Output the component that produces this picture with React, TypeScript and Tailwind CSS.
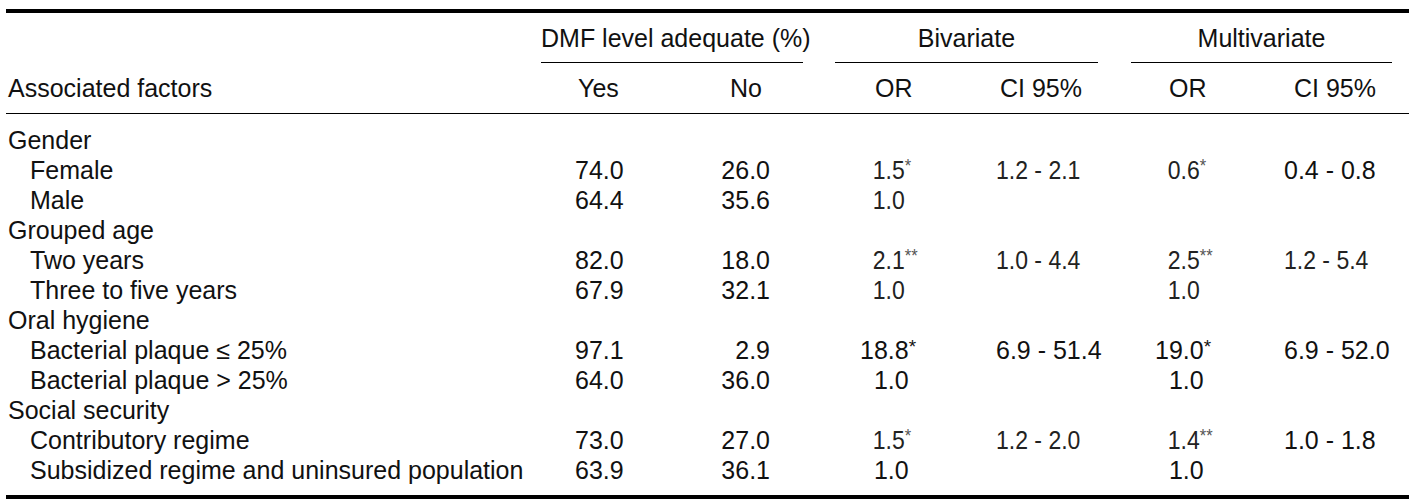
import type { ReactNode } from "react"

type Num = { v: string; star?: string; narrow?: boolean }

type Row = {
  label: string
  group?: boolean
  yes?: string
  no?: string
  or1?: Num
  ci1?: Num
  or2?: Num
  ci2?: Num
}

const rows: Row[] = [
  { label: "Gender", group: true },
  {
    label: "Female",
    yes: "74.0",
    no: "26.0",
    or1: { v: "1.5", star: "*", narrow: true },
    ci1: { v: "1.2 - 2.1", narrow: true },
    or2: { v: "0.6", star: "*", narrow: true },
    ci2: { v: "0.4 - 0.8" },
  },
  { label: "Male", yes: "64.4", no: "35.6", or1: { v: "1.0", narrow: true } },
  { label: "Grouped age", group: true },
  {
    label: "Two years",
    yes: "82.0",
    no: "18.0",
    or1: { v: "2.1", star: "**", narrow: true },
    ci1: { v: "1.0 - 4.4", narrow: true },
    or2: { v: "2.5", star: "**", narrow: true },
    ci2: { v: "1.2 - 5.4", narrow: true },
  },
  {
    label: "Three to five years",
    yes: "67.9",
    no: "32.1",
    or1: { v: "1.0", narrow: true },
    or2: { v: "1.0", narrow: true },
  },
  { label: "Oral hygiene", group: true },
  {
    label: "Bacterial plaque \u2264 25%",
    yes: "97.1",
    no: "2.9",
    or1: { v: "18.8", star: "*" },
    ci1: { v: "6.9 - 51.4" },
    or2: { v: "19.0", star: "*" },
    ci2: { v: "6.9 - 52.0" },
  },
  {
    label: "Bacterial plaque > 25%",
    yes: "64.0",
    no: "36.0",
    or1: { v: "1.0" },
    or2: { v: "1.0" },
  },
  { label: "Social security", group: true },
  {
    label: "Contributory regime",
    yes: "73.0",
    no: "27.0",
    or1: { v: "1.5", star: "*", narrow: true },
    ci1: { v: "1.2 - 2.0", narrow: true },
    or2: { v: "1.4", star: "**", narrow: true },
    ci2: { v: "1.0 - 1.8" },
  },
  {
    label: "Subsidized regime and uninsured population",
    yes: "63.9",
    no: "36.1",
    or1: { v: "1.0" },
    or2: { v: "1.0" },
  },
]

const cols = "grid grid-cols-[529px_137px_131px_32px_131px_132px_33px_130px_131px_17px]"

// odds ratios line up on the decimal point: pad one-digit values with a hidden 0
function Value({ n, pad }: { n?: Num; pad?: boolean }) {
  if (!n) return null
  const short = pad && n.v.indexOf(".") === 1
  return (
    <span
      className={
        n.narrow
          ? "inline-block origin-left scale-x-[0.92] text-[#222]"
          : "inline-block"
      }
    >
      {short ? <span className="invisible">0</span> : null}
      {n.v}
      {n.star ? (
        <span
          className={
            n.narrow
              ? "align-[7px] text-[18px] leading-none text-[#555]"
              : "align-[6px] text-[19px] leading-none"
          }
        >
          {n.star}
        </span>
      ) : null}
    </span>
  )
}

function Cell({ className, children }: { className?: string; children?: ReactNode }) {
  return <div className={`h-[30px] whitespace-nowrap ${className ?? ""}`}>{children}</div>
}

export default function App() {
  return (
    <div className="min-h-[500px] bg-white pt-[9px] font-['Liberation_Sans',Arial,sans-serif] text-[25px] leading-[30px] text-[#111]">
      <div className="ml-[6px] w-[1403px] border-t-4 border-b-4 border-black pt-[10px] pb-[10px]">
        <div className="flex whitespace-nowrap">
          <div className="w-[535px] shrink-0" />
          <div className="w-[262px] shrink-0 border-b border-black pb-[9px] text-center">
            DMF level adequate (%)
          </div>
          <div className="w-[32px] shrink-0" />
          <div className="w-[263px] shrink-0 border-b border-black pb-[9px] text-center">
            Bivariate
          </div>
          <div className="w-[33px] shrink-0" />
          <div className="w-[261px] shrink-0 border-b border-black pb-[9px] text-center">
            Multivariate
          </div>
        </div>

        <div className={`${cols} mt-[10px] border-b border-black pb-[10px]`}>
          <Cell className="pl-[2px]">Associated factors</Cell>
          <Cell className="pl-[43px]">Yes</Cell>
          <Cell className="pl-[58px]">No</Cell>
          <Cell />
          <Cell className="pl-[40px]">OR</Cell>
          <Cell className="pl-[34px]">CI 95%</Cell>
          <Cell />
          <Cell className="pl-[38px]">OR</Cell>
          <Cell className="pl-[33px]">CI 95%</Cell>
          <Cell />
        </div>

        <div className={`${cols} pt-[11px]`}>
          {rows.map((row) =>
            row.group ? (
              <Cell key={row.label} className="col-span-10 pl-[2px]">
                {row.label}
              </Cell>
            ) : (
              <div key={row.label} className="contents">
                <Cell className="pl-[24px]">{row.label}</Cell>
                <Cell className="pl-[40px]">{row.yes}</Cell>
                <Cell className="pr-[33px] text-right">{row.no}</Cell>
                <Cell />
                <Cell className="pl-[25px]">
                  <Value n={row.or1} pad />
                </Cell>
                <Cell className="pl-[30px]">
                  <Value n={row.ci1} />
                </Cell>
                <Cell />
                <Cell className="pl-[24px]">
                  <Value n={row.or2} pad />
                </Cell>
                <Cell className="pl-[23px]">
                  <Value n={row.ci2} />
                </Cell>
                <Cell />
              </div>
            ),
          )}
        </div>
      </div>
    </div>
  )
}
